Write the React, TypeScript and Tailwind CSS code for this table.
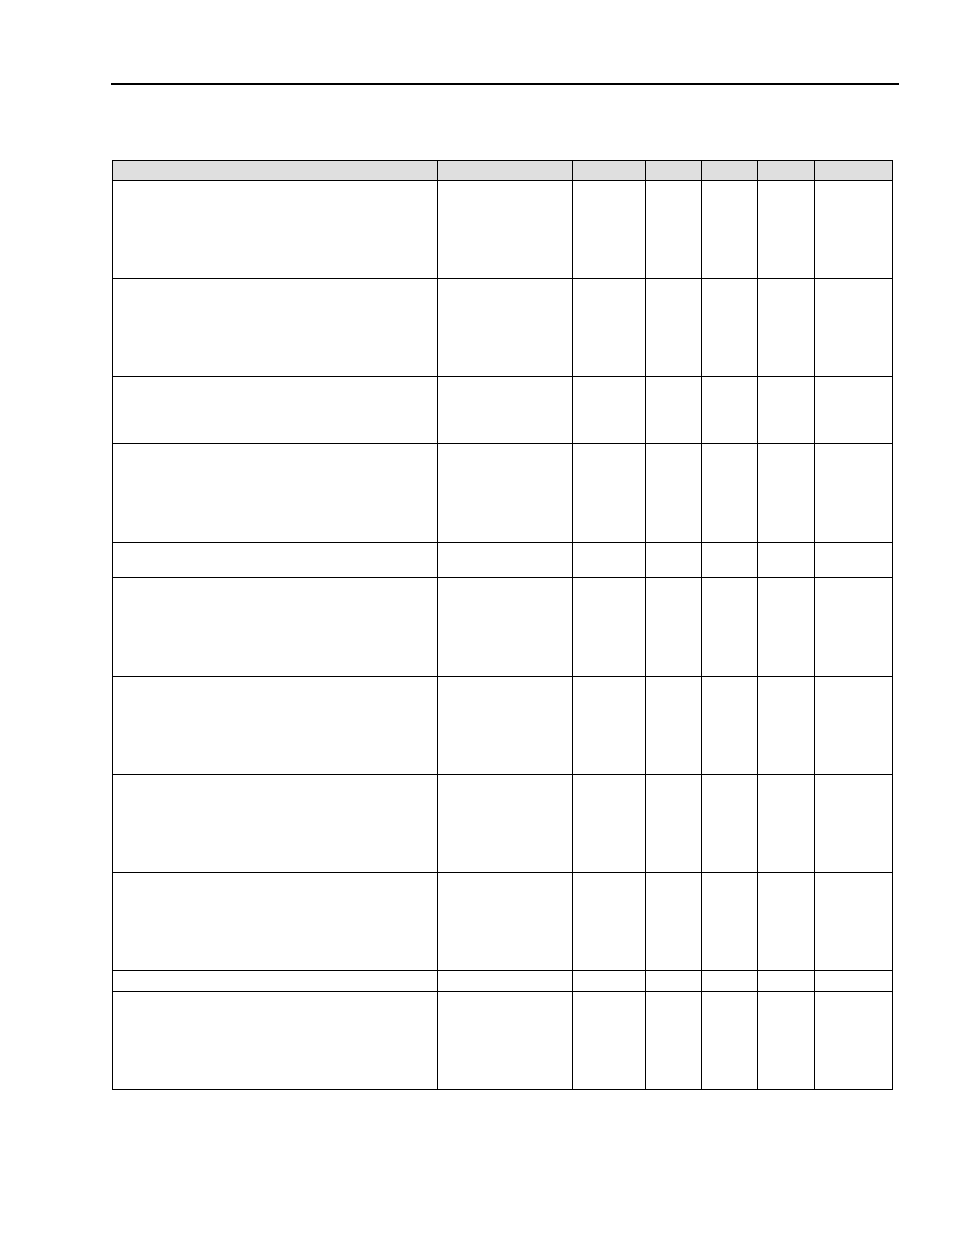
import React from "react";

const rowHeights = [19, 97, 97, 66, 98, 34, 98, 97, 97, 97, 20, 97];
const rowClass = [
  "h-[19px]", "h-[97px]", "h-[97px]", "h-[66px]", "h-[98px]", "h-[34px]",
  "h-[98px]", "h-[97px]", "h-[97px]", "h-[97px]", "h-[20px]", "h-[97px]",
];

export default function App() {
  return (
    <div className="min-h-[1235px] w-[954px] bg-white pt-[83px] font-['Liberation_Sans',Arial,sans-serif]">
      <div className="ml-[111px] h-[2px] w-[788px] bg-black" />
      <div className="ml-[112px] mt-[75px] grid w-fit grid-cols-[324px_134px_72px_55px_55px_56px_77px] gap-px border border-black bg-black">
        {rowHeights.map((_, r) =>
          Array.from({ length: 7 }).map((__, c) => (
            <div
              key={`${r}-${c}`}
              className={`${rowClass[r]} ${r === 0 ? "bg-[#dfdfdf]" : "bg-white"}`}
            />
          ))
        )}
      </div>
    </div>
  );
}
